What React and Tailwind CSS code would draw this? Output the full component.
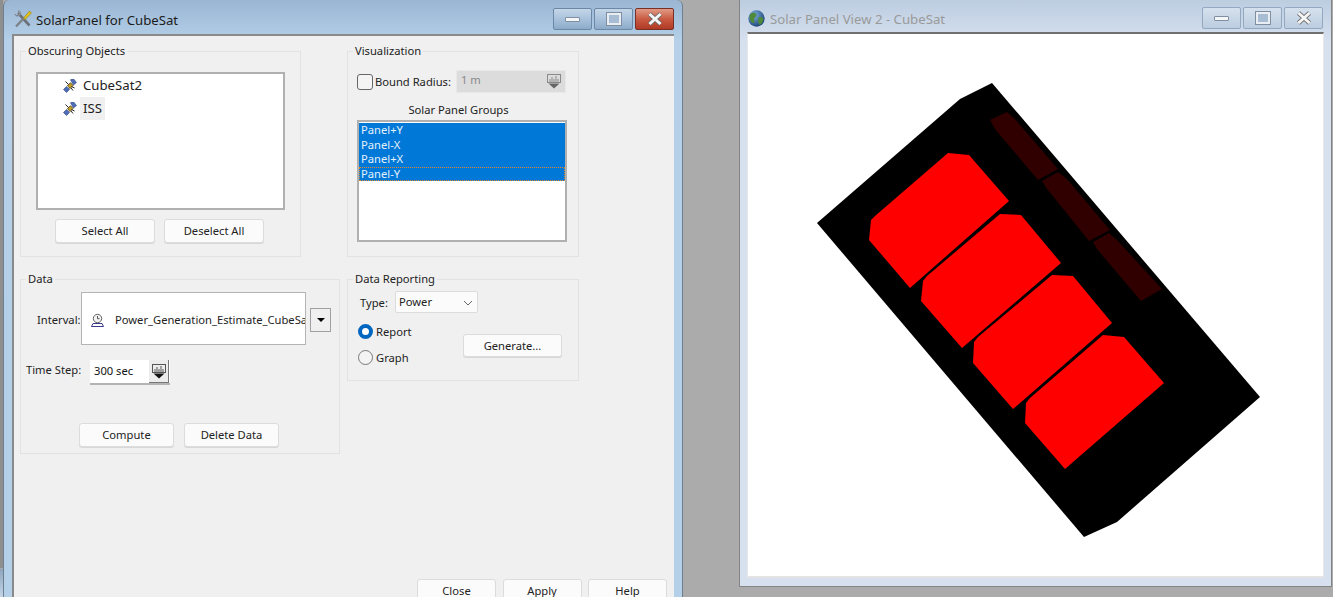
const FONT = "font-['Noto_Sans','Liberation_Sans',sans-serif]";

const SATELLITE = (
    <svg width="14" height="14" viewBox="0 0 14 14" className="shrink-0">
        <path d="M0.5 10.5 L3.5 7.5 L6.5 10.5 L3.5 13.5 Z" fill="#4f6fb5" stroke="#2f3f80" strokeWidth="0.6" />
        <path d="M7.5 0.8 L10.5 -0.2 L13.5 3.5 L10.5 6 Z" fill="#4f6fb5" stroke="#2f3f80" strokeWidth="0.6" />
        <path d="M4.5 6.5 L7.5 3.8 L10 6.5 L7 9.5 Z" fill="#c9a227" stroke="#40350a" strokeWidth="0.8" />
        <path d="M2.5 2.5 L5.5 5.5 M11.5 9 L8.5 7.5 M10 11.5 L8 9" stroke="#222" strokeWidth="1" />
    </svg>
);

function SpinIcon({ color = "#111", line = "#555" }) {
    return (
        <svg width="14" height="15" viewBox="0 0 14 15">
            <rect x="0.5" y="0.5" width="13" height="8" fill="none" stroke={line} />
            <path d="M3 8V5 M5 8V3 M7 8V5 M9 8V2 M11 8V5" stroke={line} />
            <path d="M1.5 9.5 H12.5 L7 14.5 Z" fill={color} />
        </svg>
    );
}

function Caption({ active }) {
    const box = active
        ? "border-[#6d88a6] bg-gradient-to-b from-[#c4d6e8] via-[#a9c2dc] to-[#8cabc9]"
        : "border-[#93a9c2] bg-gradient-to-b from-[#d5e1ed] to-[#bccde0]";
    return (
        <div className="flex gap-[2px]">
            <div className={`w-[39px] h-[22px] border rounded-[2px] flex items-center justify-center ${box}`}>
                <span className="w-[15px] h-[5px] bg-[#f4f6f8] border border-[#7f8ea0] rounded-[1px]" />
            </div>
            <div className={`w-[39px] h-[22px] border rounded-[2px] flex items-center justify-center ${box}`}>
                <span className="w-[14px] h-[12px] bg-[#a8bdd4] border-2 border-[#e8edf2] outline outline-1 outline-[#7f8ea0]" />
            </div>
            <div className={`w-[39px] h-[22px] border rounded-[2px] flex items-center justify-center ${active ? "border-[#7a2f26] bg-gradient-to-b from-[#e09a85] via-[#c95a42] to-[#b03a25]" : box}`}>
                <svg width="16" height="14" viewBox="0 0 16 14">
                    <path d="M2.5 2 L13.5 12 M13.5 2 L2.5 12" stroke="#6a6a6a" strokeWidth="4.4" />
                    <path d="M2.5 2 L13.5 12 M13.5 2 L2.5 12" stroke="#f5f5f5" strokeWidth="3" />
                </svg>
            </div>
        </div>
    );
}

function Group({ title, className, children }) {
    return (
        <div className={`relative border border-[#e2e2e2] shrink-0 ${className}`}>
            <span className="absolute -top-[9px] left-[5px] bg-[#f0f0f0] px-[2px] text-[11.2px] leading-[16px] text-[#222]">{title}</span>
            {children}
        </div>
    );
}

function Btn({ children, className = "w-[100px] h-[24px]" }) {
    return (
        <div className={`flex items-center justify-center bg-[#fbfbfb] border border-[#dcdcdc] rounded-[3px] shadow-[0_1px_0_#d8d8d8] text-[11.2px] text-[#222] shrink-0 ${className}`}>
            {children}
        </div>
    );
}

const OBJECTS = [
    { name: "CubeSat2", hover: false },
    { name: "ISS", hover: true },
];

const PANELS = ["Panel+Y", "Panel-X", "Panel+X", "Panel-Y"];

const RED = [
    "948,153 969,155 1009,201 910,288 869,240 871,220 875,216",
    "1000,214 1021,215 1061,263 962,348 921,301 923,281 927,276",
    "1052,275 1073,276 1112,323 1013,409 973,363 974,342 978,337",
    "1103,335 1124,337 1164,383 1065,469 1025,423 1026,403 1030,398",
];

const DARK = [
    "990,120 1007,112 1015,119 1058,169 1038,180 1000,135 995,129",
    "1042,181 1058,172 1067,179 1110,230 1089,241 1052,195 1047,189",
    "1093,242 1109,233 1117,240 1162,289 1141,301 1102,255 1097,249",
];

export default function App() {
    return (
        <div className={`relative w-[1333px] h-[597px] overflow-hidden bg-[#ababab] ${FONT}`}>
            {/* scrap of another window, bottom left */}
            <div className="absolute left-0 top-0 w-[3px] h-[568px] bg-[#8f8f8f]" />
            <div className="absolute left-0 top-[569px] w-[3px] h-[28px] bg-gradient-to-b from-[#8ea6bf] to-[#c3d5e6]" />

            {/* SolarPanel dialog */}
            <div className="absolute left-[3px] top-0 w-[680px] h-[597px] flex flex-col overflow-hidden rounded-t-[6px] border-x border-[#6f7f8e] bg-gradient-to-b from-[#9ab6d3] via-[#b5d0e8] via-[7%] to-[#b3d0e8]">
                <div className="h-[34px] shrink-0 flex items-center pl-[10px] pr-[8px]">
                    <svg width="18" height="18" viewBox="0 0 18 18" className="shrink-0 mt-[4px]">
                        <path d="M4 3 L15.5 15.5" stroke="#6b7178" strokeWidth="2.6" />
                        <path d="M1 4 L3 6 L6 3 L4 1 C6 0.5 7 2 6.5 4 L5 5.5 C3 6.5 1 6 1 4 Z" fill="#c2c7cc" stroke="#6b7178" strokeWidth="0.6" />
                        <path d="M2 16.5 L10 8" stroke="#7d8388" strokeWidth="2.4" />
                        <path d="M9.5 8 L15.5 1 L17.5 3 L11 9.5 Z" fill="#e3c21e" stroke="#8f7a10" strokeWidth="0.6" />
                    </svg>
                    <span className="ml-[4px] mt-[6px] text-[13.2px] text-[#1c1c1c] leading-[20px]">SolarPanel for CubeSat</span>
                    <div className="ml-auto mt-[4px]">
                        <Caption active />
                    </div>
                </div>

                <div className="flex-1 ml-[8px] mr-[8px] border-t-2 border-l-2 border-[#8a8a8a] bg-[#f0f0f0] pl-[6px] pt-[15px] flex flex-col">
                    <div className="flex gap-[46px]">
                        <Group title="Obscuring Objects" className="w-[281px] h-[206px]">
                            <div className="ml-[15px] mt-[20px] w-[249px] h-[138px] bg-white border-2 border-[#b0b0b0] pl-[25px]">
                                {OBJECTS.map((o) => (
                                    <div key={o.name} className="flex items-center h-[23px]">
                                        {SATELLITE}
                                        <span className={`ml-[3px] px-[3px] leading-[23px] text-[13.2px] text-[#222] ${o.hover ? "bg-[#f0f0f0]" : ""}`}>{o.name}</span>
                                    </div>
                                ))}
                            </div>
                            <div className="ml-[34px] mt-[9px] flex gap-[9px]">
                                <Btn>Select All</Btn>
                                <Btn>Deselect All</Btn>
                            </div>
                        </Group>

                        <Group title="Visualization" className="w-[232px] h-[206px]">
                            <div className="mt-[18px] pl-[9px] flex items-center h-[23px]">
                                <span className="w-[16px] h-[16px] border border-[#666] rounded-[3px] bg-[#f4f4f4] shrink-0" />
                                <span className="ml-[2px] mt-[1px] w-[81px] text-[11.2px] text-[#222] whitespace-nowrap">Bound Radius:</span>
                                <div className="w-[110px] h-[23px] bg-[#dcdcdc] border border-[#e8e8e8] flex items-center pl-[4px] pr-[4px] text-[11.2px] text-[#8a8a8a]">
                                    <span className="-mt-[2px]">1 m</span>
                                    <span className="ml-auto flex">
                                        <SpinIcon color="#666" line="#8a8a8a" />
                                    </span>
                                </div>
                            </div>
                            <div className="mt-[9px] text-center text-[11.2px] leading-[16px] text-[#222] pr-[9px]">Solar Panel Groups</div>
                            <div className="ml-[9px] mt-[2px] w-[210px] h-[122px] bg-white border-2 border-[#b0b0b0] pt-[1px]">
                                {PANELS.map((p, i) => (
                                    <div
                                        key={p}
                                        className={`h-[14.6px] bg-[#0078d7] pl-[2px] text-[11.2px] leading-[14px] text-[#e4f0fb] ${i === 3 ? "outline-1 -outline-offset-1 outline-dotted outline-[#e08a30]" : ""}`}
                                    >
                                        {p}
                                    </div>
                                ))}
                            </div>
                        </Group>
                    </div>

                    <div className="mt-[22px] flex items-start gap-[7px]">
                        <Group title="Data" className="w-[320px] h-[175px]">
                            <div className="mt-[12px] pl-[16px] flex items-center">
                                <span className="w-[44px] mt-[3px] text-[11.2px] text-[#222]">Interval:</span>
                                <div className="w-[225px] h-[53px] bg-white border border-[#b4b4b4] flex items-center pt-[3px] pl-[8px] overflow-hidden">
                                    <svg width="15" height="15" viewBox="0 0 15 15" className="shrink-0">
                                        <circle cx="7.5" cy="5.5" r="4.2" fill="#f2f2f2" stroke="#666" />
                                        <path d="M7.5 3 V5.7 H9.5" fill="none" stroke="#555" />
                                        <path d="M3 10.5 H12 L13.5 13.5 H1.5 Z" fill="#fff" stroke="#3a3a90" />
                                    </svg>
                                    <span className="ml-[10px] text-[11.2px] text-[#222] whitespace-nowrap">Power_Generation_Estimate_CubeSat</span>
                                </div>
                                <div className="ml-[4px] mt-[3px] w-[21px] h-[24px] border border-[#a0a0a0] bg-[#f0f0f0] flex items-center justify-center">
                                    <span className="w-0 h-0 border-x-[4px] border-x-transparent border-t-[4px] border-t-black" />
                                </div>
                            </div>
                            <div className="mt-[15px] pl-[5px] flex items-start">
                                <span className="w-[64px] mt-[1px] text-[11.2px] leading-[18px] text-[#222]">Time Step:</span>
                                <div className="w-[80px] h-[25px] bg-white border-b-2 border-[#b4b4b4] flex items-center pl-[4px] text-[11.2px] text-[#111]">
                                    <span>300 sec</span>
                                    <span className="ml-auto mr-px w-[20px] h-[23px] flex items-center justify-center bg-[#ececec] border-r border-b border-[#777]">
                                        <SpinIcon />
                                    </span>
                                </div>
                            </div>
                            <div className="mt-[38px] ml-[58px] flex gap-[10px]">
                                <Btn className="w-[95px] h-[24px] pt-px">Compute</Btn>
                                <Btn className="w-[95px] h-[24px] pt-px">Delete Data</Btn>
                            </div>
                        </Group>

                        <Group title="Data Reporting" className="w-[232px] h-[102px]">
                            <div className="mt-[11px] pl-[12px] flex items-center">
                                <span className="w-[35px] mt-[2px] text-[11.2px] text-[#222]">Type:</span>
                                <div className="w-[83px] h-[22px] bg-[#fbfbfb] border border-[#dcdcdc] rounded-[2px] flex items-center pt-px pl-[3px] pr-[4px] text-[11.2px] text-[#222]">
                                    <span>Power</span>
                                    <svg width="10" height="6" viewBox="0 0 10 6" className="ml-auto">
                                        <path d="M1 1 L5 5 L9 1" fill="none" stroke="#666" />
                                    </svg>
                                </div>
                            </div>
                            <div className="mt-[11px] pl-[10px] flex items-start">
                                <div className="w-[105px] flex flex-col gap-[11px]">
                                    <div className="flex items-center h-[15px]">
                                        <span className="w-[15px] h-[15px] rounded-full border-[4px] border-[#0067c0] bg-white shrink-0" />
                                        <span className="ml-[3px] mt-[2px] text-[11.2px] text-[#222]">Report</span>
                                    </div>
                                    <div className="flex items-center h-[15px]">
                                        <span className="w-[15px] h-[15px] rounded-full border border-[#777] bg-[#f4f4f4] shrink-0" />
                                        <span className="ml-[3px] mt-[2px] text-[11.2px] text-[#222]">Graph</span>
                                    </div>
                                </div>
                                <Btn className="mt-[10px] w-[99px] h-[23px] pt-[2px]">Generate...</Btn>
                            </div>
                        </Group>
                    </div>

                    <div className="mt-[125px] mr-[7px] flex justify-end gap-[6.5px]">
                        <Btn className="w-[79px] h-[24px] pt-px">Close</Btn>
                        <Btn className="w-[79px] h-[24px] pt-px">Apply</Btn>
                        <Btn className="w-[79px] h-[24px] pt-px">Help</Btn>
                    </div>
                </div>
            </div>

            {/* View window */}
            <div className="absolute left-[739px] top-0 w-[593px] h-[587px] flex flex-col border-x border-b border-[#848484] bg-gradient-to-b from-[#bccde0] via-[#d6e0ef] via-[7%] to-[#d6e0ef]">
                <div className="h-[32px] shrink-0 flex items-center pl-[8px] pr-[8px]">
                    <svg width="17" height="17" viewBox="0 0 16 16" className="shrink-0 mt-[4px]">
                        <defs>
                            <radialGradient id="globe" cx="0.35" cy="0.3" r="0.8">
                                <stop offset="0" stopColor="#7fb2e0" />
                                <stop offset="1" stopColor="#123a6e" />
                            </radialGradient>
                        </defs>
                        <circle cx="8" cy="8" r="7.7" fill="url(#globe)" />
                        <path d="M2 4 C5 1.5 8 2.5 8 5 C8 7 5 7 6 10 C6.5 12.5 4.5 13 3 11 C1.5 9 1 6 2 4 Z" fill="#4f8a3a" />
                        <path d="M10 7 C12 6 14.5 7 14.5 9 C14 12 12 14 10.5 14 C10 12 9 9 10 7 Z" fill="#4f8a3a" />
                    </svg>
                    <span className="ml-[5px] mt-[6px] text-[13.2px] text-[#9a9a9a] leading-[20px]">Solar Panel View 2 - CubeSat</span>
                    <div className="ml-auto mt-[4px]">
                        <Caption />
                    </div>
                </div>
                <div className="mx-[7px] mb-[8px] flex-1 min-h-0 bg-white border-t-2 border-t-[#707070] border-x border-x-[#e8e8e8] border-b-2 border-b-[#e4e4e4]">
                    <svg viewBox="748 34 575 542" className="w-full h-full block">
                        <polygon points="992,83 1260,397 1117,522 1084,537 817,223 960,99" fill="#000" />
                        {RED.map((p) => (
                            <polygon key={p} points={p} fill="#ff0000" />
                        ))}
                        {DARK.map((p) => (
                            <polygon key={p} points={p} fill="#300000" />
                        ))}
                    </svg>
                </div>
            </div>
        </div>
    );
}
